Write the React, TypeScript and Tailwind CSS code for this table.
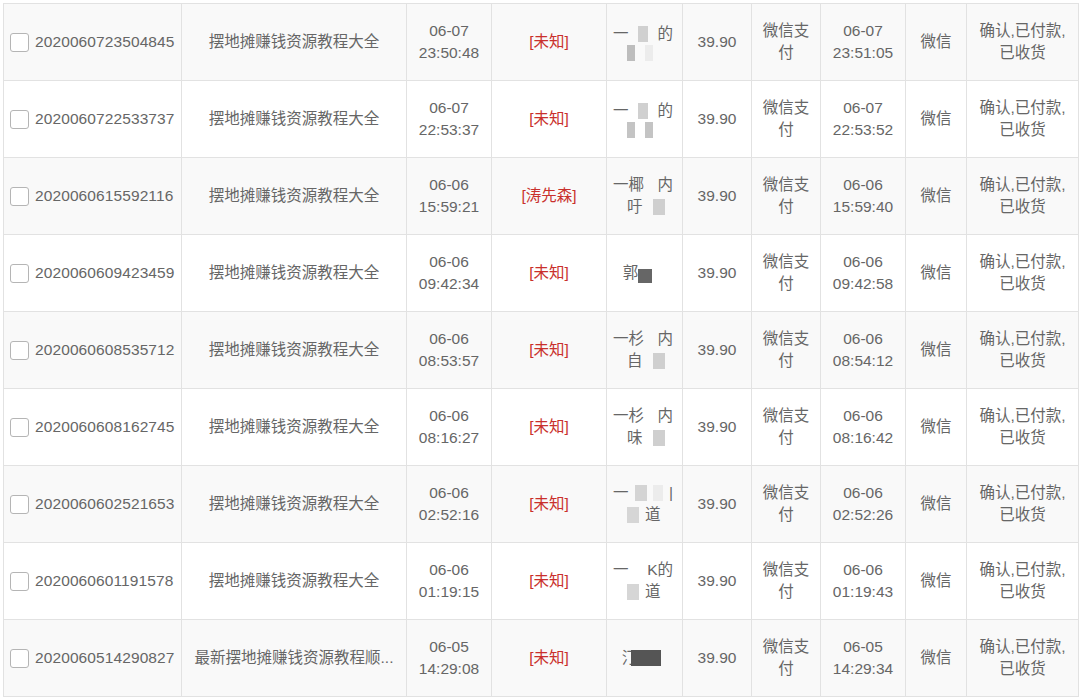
import React from 'react';

interface Order {
  no: string;
  title: string;
  created: [string, string];
  source: string;
  buyer: number;
  paid: [string, string];
}

const orders: Order[] = [
  { no: '2020060723504845', title: '摆地摊赚钱资源教程大全', created: ['06-07', '23:50:48'], source: '[未知]', buyer: 0, paid: ['06-07', '23:51:05'] },
  { no: '2020060722533737', title: '摆地摊赚钱资源教程大全', created: ['06-07', '22:53:37'], source: '[未知]', buyer: 1, paid: ['06-07', '22:53:52'] },
  { no: '2020060615592116', title: '摆地摊赚钱资源教程大全', created: ['06-06', '15:59:21'], source: '[涛先森]', buyer: 2, paid: ['06-06', '15:59:40'] },
  { no: '2020060609423459', title: '摆地摊赚钱资源教程大全', created: ['06-06', '09:42:34'], source: '[未知]', buyer: 3, paid: ['06-06', '09:42:58'] },
  { no: '2020060608535712', title: '摆地摊赚钱资源教程大全', created: ['06-06', '08:53:57'], source: '[未知]', buyer: 4, paid: ['06-06', '08:54:12'] },
  { no: '2020060608162745', title: '摆地摊赚钱资源教程大全', created: ['06-06', '08:16:27'], source: '[未知]', buyer: 5, paid: ['06-06', '08:16:42'] },
  { no: '2020060602521653', title: '摆地摊赚钱资源教程大全', created: ['06-06', '02:52:16'], source: '[未知]', buyer: 6, paid: ['06-06', '02:52:26'] },
  { no: '2020060601191578', title: '摆地摊赚钱资源教程大全', created: ['06-06', '01:19:15'], source: '[未知]', buyer: 7, paid: ['06-06', '01:19:43'] },
  { no: '2020060514290827', title: '最新摆地摊赚钱资源教程顺...', created: ['06-05', '14:29:08'], source: '[未知]', buyer: 8, paid: ['06-05', '14:29:34'] },
];

// 打码块
const Blk = ({ c = 'bg-[#c8c8c8]', w = 'w-[14px]' }: { c?: string; w?: string }) => (
  <span className={`inline-block ${w} h-[16px] align-middle ${c}`}></span>
);

// 买家昵称（已打码）
function Buyer({ kind }: { kind: number }) {
  if (kind === 3) {
    return (
      <div className="flex items-center justify-center w-full pr-[14px]">
        <span>郭</span>
        <span className="inline-block w-[14px] h-[14px] mt-[6px] bg-[#666]"></span>
      </div>
    );
  }
  if (kind === 8) {
    return (
      <div className="flex items-center justify-center w-full pr-[6px]">
        <span>汀</span>
        <span className="inline-block w-[30px] h-[16px] -ml-[6px] bg-[#555]"></span>
      </div>
    );
  }
  const first: Record<number, [string, string]> = {
    0: ['一', '的'],
    1: ['一', '的'],
    2: ['一椰', '内'],
    4: ['一杉', '内'],
    5: ['一杉', '内'],
    6: ['一', '|'],
    7: ['一', 'K的'],
  };
  const second: Record<number, string> = { 2: '吁', 4: '自', 5: '味' };
  const [a, b] = first[kind];
  return (
    <div className="flex flex-col w-full pl-[6px] pr-[9px] leading-[22px]">
      <div className="flex items-center justify-between">
        <span>{a}</span>
        {(kind === 0 || kind === 1) && <Blk c="bg-[#d0d0d0]" w="w-[10px]" />}
        {kind === 6 && <><Blk c="bg-[#d4d4d4]" w="w-[12px]" /><Blk c="bg-[#ececec]" w="w-[10px]" /></>}
        <span>{b}</span>
      </div>
      <div className="flex items-center gap-[10px] pl-[14px]">
        {second[kind] && <span>{second[kind]}</span>}
        {kind === 0 && <><Blk c="bg-[#bdbdbd]" w="w-[8px]" /><Blk c="bg-[#ececec]" w="w-[8px]" /></>}
        {kind === 1 && <><Blk c="bg-[#c4c4c4]" w="w-[8px]" /><Blk c="bg-[#c4c4c4]" w="w-[8px]" /></>}
        {(kind === 2 || kind === 4 || kind === 5) && <Blk c="bg-[#cfcfcf]" w="w-[12px]" />}
        {(kind === 6 || kind === 7) && <><Blk c="bg-[#d6d6d6]" w="w-[12px]" /><span className="-ml-[4px]">道</span></>}
      </div>
    </div>
  );
}

const cell = 'flex items-center justify-center border-r border-[#e2e2e2] text-center';

export default function App() {
  return (
    <div
      className="w-[1080px] h-[699px] bg-white overflow-hidden text-[15.5px] text-[#666]"
      style={{ fontFamily: '"Liberation Sans", "Noto Sans CJK SC", sans-serif' }}
    >
      <div className="ml-[3px] mt-[3px] w-[1076px] border-l border-t border-[#e2e2e2]">
        {orders.map((o, i) => (
          <div
            key={o.no}
            className={`grid grid-cols-[178px_225px_85px_115px_76px_69px_69px_85px_61px_112px] h-[77px] border-b border-[#e2e2e2] ${i % 2 === 0 ? 'bg-[#f9f9f9]' : 'bg-white'}`}
          >
            {/* 订单号 */}
            <div className="flex items-center border-r border-[#e2e2e2] pl-[6px]">
              <span className="inline-block w-[19px] h-[19px] rounded-[3px] border border-[#b5b5b5] bg-white mr-[6px]"></span>
              <span className="tracking-[0.1px]">{o.no}</span>
            </div>
            {/* 商品 */}
            <div className={`${cell} px-[6px]`}>
              <span className="whitespace-nowrap">{o.title}</span>
            </div>
            {/* 下单时间 */}
            <div className={`${cell} flex-col leading-[22px]`}>
              <span>{o.created[0]}</span>
              <span>{o.created[1]}</span>
            </div>
            {/* 来源 */}
            <div className={`${cell} text-[#c9302c]`}>{o.source}</div>
            {/* 买家 */}
            <div className={cell}>
              <Buyer kind={o.buyer} />
            </div>
            {/* 金额 */}
            <div className={cell}>39.90</div>
            {/* 支付方式 */}
            <div className={`${cell} flex-col leading-[22px]`}>
              <span>微信支</span>
              <span>付</span>
            </div>
            {/* 付款时间 */}
            <div className={`${cell} flex-col leading-[22px]`}>
              <span>{o.paid[0]}</span>
              <span>{o.paid[1]}</span>
            </div>
            {/* 渠道 */}
            <div className={cell}>微信</div>
            {/* 状态 */}
            <div className={`${cell} flex-col leading-[22px]`}>
              <span>确认,已付款,</span>
              <span>已收货</span>
            </div>
          </div>
        ))}
      </div>
    </div>
  );
}
